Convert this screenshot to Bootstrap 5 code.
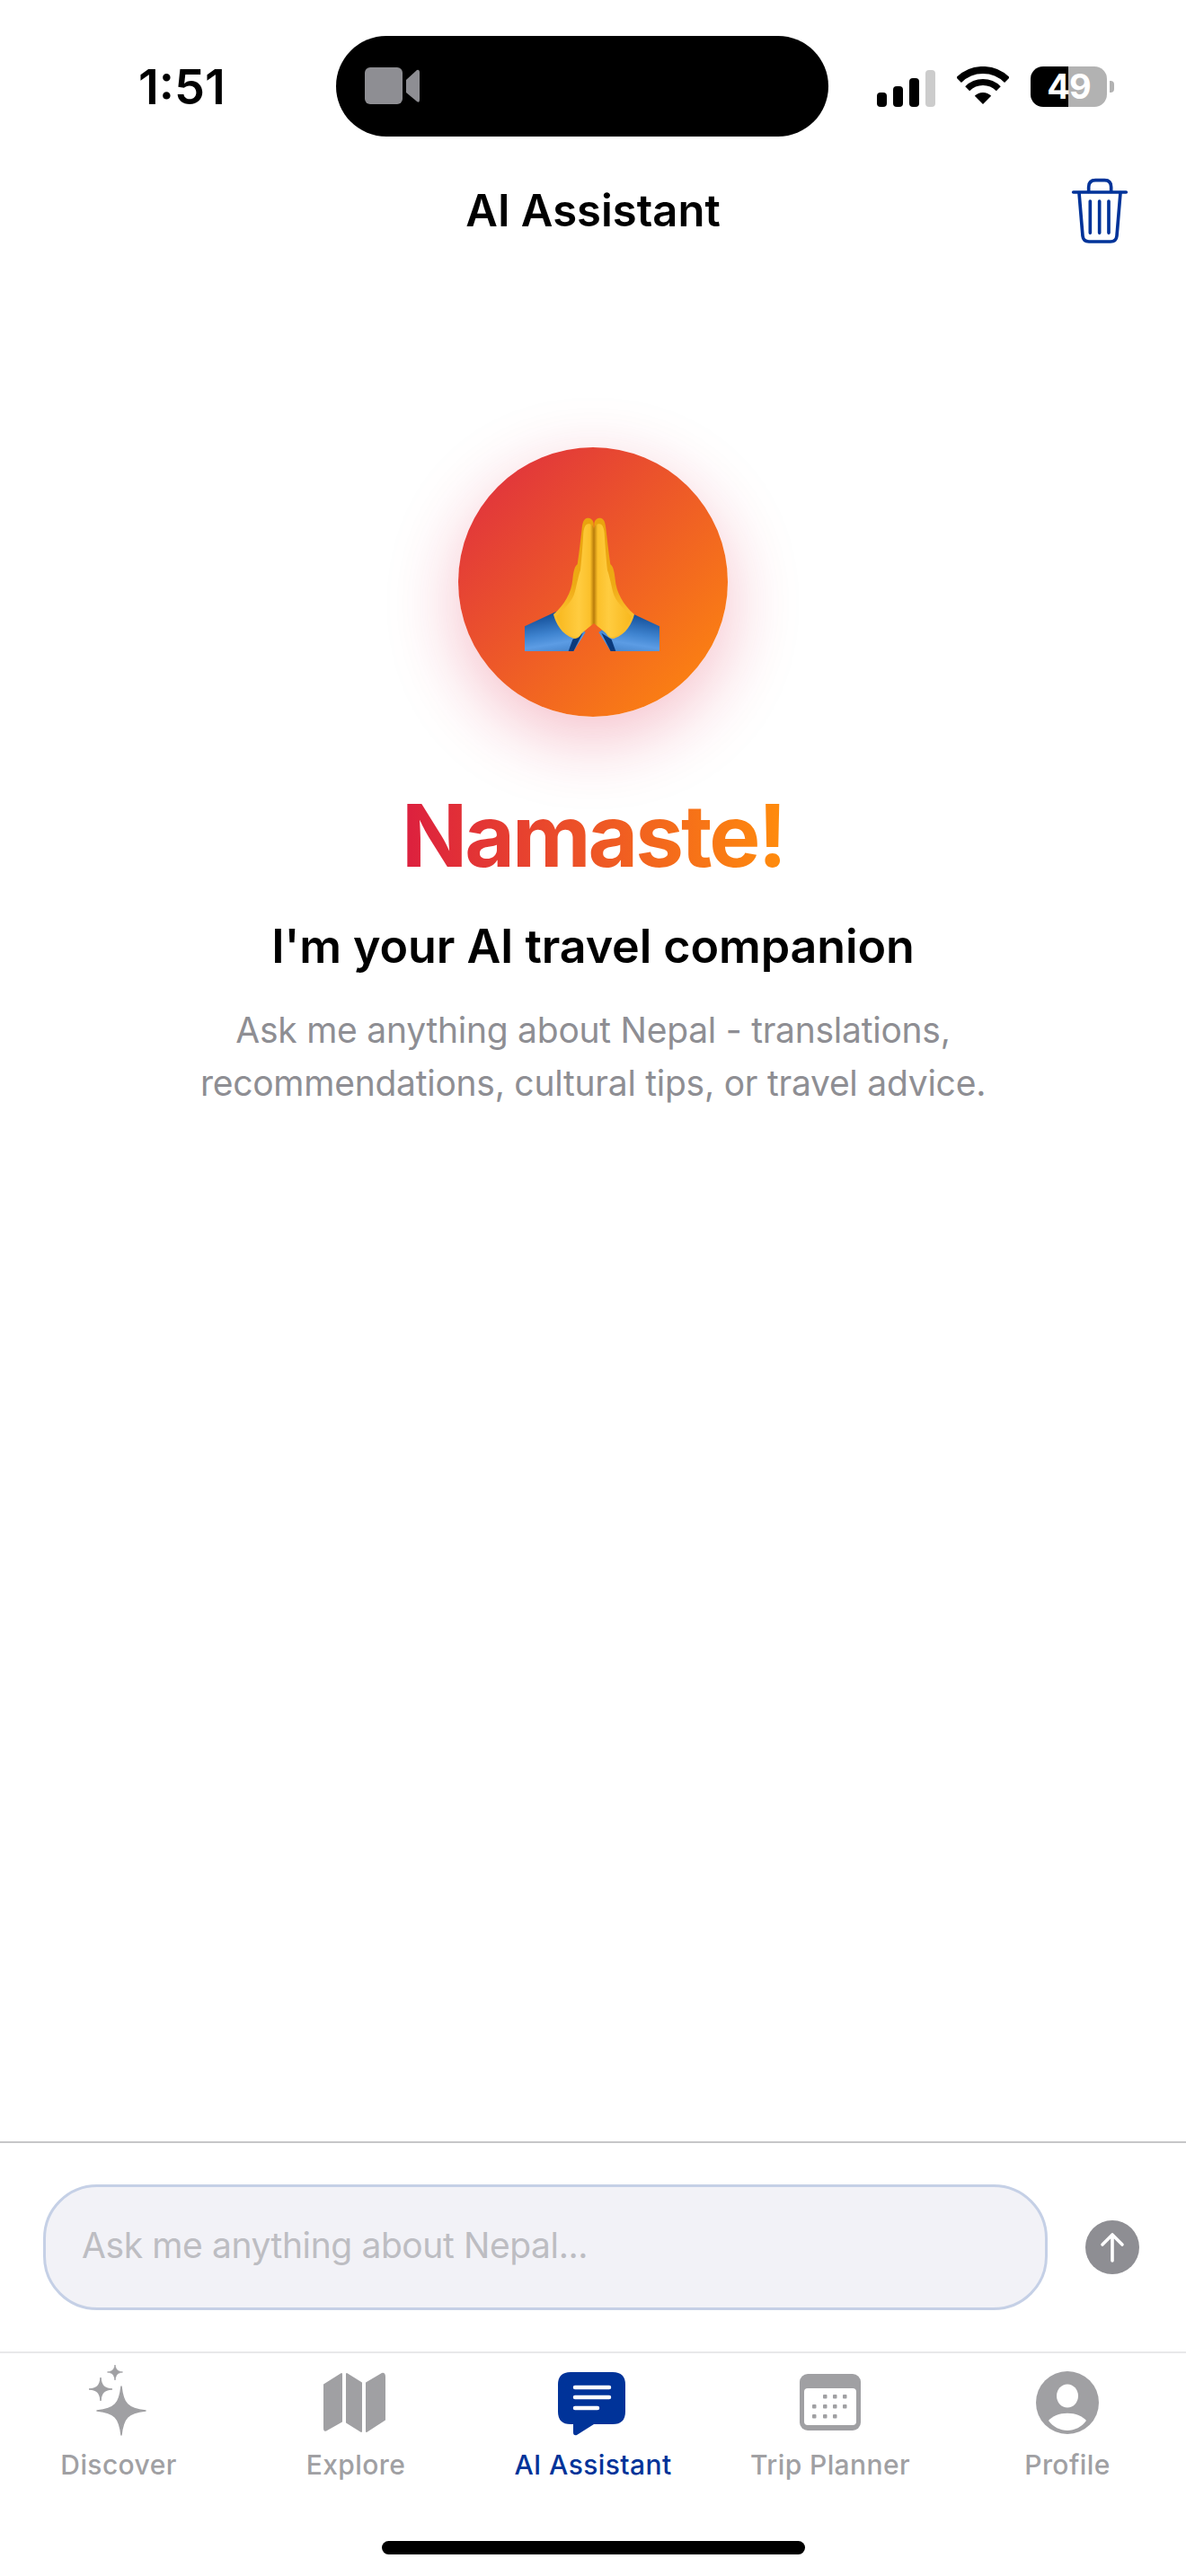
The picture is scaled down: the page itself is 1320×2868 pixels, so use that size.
<!DOCTYPE html>
<html lang="en">
  <head>
    <meta charset="UTF-8" />
    <meta name="viewport" content="width=device-width, initial-scale=1.0" />
    <title>AI Assistant</title>
    <link
      rel="stylesheet"
      href="https://cdn.jsdelivr.net/npm/bootstrap@5.3.0/dist/css/bootstrap.min.css"
    />
    <style>
      body {
        font-family: Inter, "Liberation Sans", sans-serif;
        background: #fff;
        color: #000;
      }

      .phone-page {
        width: 1320px;
        height: 2868px;
        overflow: hidden;
      }

      /* status bar */
      .status-row {
        height: 152px;
        padding-top: 40px;
      }

      .clock {
        width: 374px;
        padding-left: 154px;
        padding-top: 25px;
        font-size: 54px;
        font-weight: 600;
        line-height: 64px;
        white-space: nowrap;
      }

      .island {
        width: 548px;
        height: 112px;
        background: #000;
        border-radius: 56px;
        padding-left: 32px;
      }

      .status-icons {
        margin-left: 54px;
        padding-top: 34px;
      }

      .battery-box {
        width: 85px;
        height: 45px;
        border-radius: 14px;
        background: linear-gradient(90deg, #000 49%, #b2b2b2 49%);
        color: #fff;
        font-size: 38px;
        font-weight: 700;
        line-height: 45px;
        letter-spacing: -1px;
      }

      .battery-nub {
        width: 5px;
        height: 13px;
        margin-left: 3px;
        background: #b2b2b2;
        border-radius: 0 4px 4px 0;
      }

      /* header */
      .top-bar {
        height: 166px;
      }

      .top-side {
        flex: 1 1 0;
      }

      .top-side svg {
        margin-right: 40px;
      }

      .top-title {
        font-size: 49px;
        font-weight: 600;
        line-height: 60px;
      }

      /* welcome */
      .welcome {
        padding-top: 180px;
      }

      .namaste-disc {
        width: 300px;
        height: 300px;
        background: linear-gradient(135deg, #dd2a42, #ff8c0c);
        box-shadow: 0 24px 80px rgba(220, 20, 60, 0.28);
      }

      .namaste-word {
        margin: 74px 0 0;
        font-size: 96px;
        font-weight: 700;
        line-height: 116px;
        letter-spacing: -3px;
        background: linear-gradient(90deg, #dc1f3f, #ff8c0c);
        -webkit-background-clip: text;
        background-clip: text;
        color: transparent;
      }

      .welcome-sub {
        margin: 32px 0 0;
        font-size: 52px;
        font-weight: 600;
        line-height: 68px;
        letter-spacing: -0.1px;
      }

      .welcome-text {
        margin: 30px 0 0;
        font-size: 39px;
        line-height: 58.5px;
        letter-spacing: -0.25px;
        color: #8e8e93;
      }

      /* compose */
      .compose-bar {
        border-top: 2px solid #c6c6c8;
        padding: 46px 52px 46px 48px;
        gap: 42px;
      }

      .ask-field {
        height: 140px;
        padding: 0 40px 5px;
        font-size: 39px;
        letter-spacing: -0.4px;
        background: #f2f2f7;
        border: 3px solid #c5d0e6;
        border-radius: 60px;
      }

      .ask-field::placeholder {
        color: #bdbdc2;
      }

      .send-btn {
        width: 60px;
        height: 60px;
        background: #8e8e93;
        border: 0;
      }

      /* tabs */
      .tab-bar {
        height: 211px;
        border-top: 2px solid #e8e8ea;
        padding-top: 10px;
      }

      .tab-link {
        width: 264px;
        color: #a0a0a3;
        font-size: 30px;
        font-weight: 500;
        line-height: 36px;
        letter-spacing: 0.4px;
        text-decoration: none;
      }

      .tab-link svg {
        display: block;
        margin-bottom: 12px;
      }

      .tab-link.is-current {
        color: #003399;
      }

      .home-bar {
        width: 471px;
        height: 15px;
        margin-bottom: 24px;
        background: #000;
      }
    </style>
  </head>

  <body>
    <div class="phone-page d-flex flex-column">
      <!-- status bar -->
      <div class="status-row d-flex flex-shrink-0">
        <div class="clock">1:51</div>
        <div class="island d-flex align-items-center">
          <svg width="64" height="44" viewBox="0 0 64 44">
            <rect x="0" y="1" width="42" height="41" rx="6" fill="#8e8e93" />
            <path d="M46 15 L58 4 Q61 3 61 7 V37 Q61 41 58 39 L46 29 Z" fill="#8e8e93" />
          </svg>
        </div>
        <div class="status-icons d-flex align-items-start">
          <svg width="65" height="41" viewBox="0 0 65 41" class="mt-1">
            <rect x="0" y="25" width="11" height="16" rx="4" />
            <rect x="18" y="18" width="11" height="23" rx="4" />
            <rect x="36" y="9" width="11" height="32" rx="4" />
            <rect x="54" y="0" width="11" height="41" rx="4" fill="#cccccc" />
          </svg>
          <svg width="58" height="42" viewBox="0 0 58 42" class="ms-4 mt-0">
            <path d="M2.1 15.1 A38 38 0 0 1 55.9 15.1" fill="none" stroke="#000" stroke-width="8" />
            <path d="M11.7 24.7 A24.5 24.5 0 0 1 46.3 24.7" fill="none" stroke="#000" stroke-width="7" />
            <path d="M29 42 L19.8 32.8 A13 13 0 0 1 38.2 32.8 Z" />
          </svg>
          <div class="d-flex align-items-center ms-4">
            <div class="battery-box text-center">49</div>
            <div class="battery-nub"></div>
          </div>
        </div>
      </div>

      <!-- header -->
      <div class="top-bar d-flex align-items-center flex-shrink-0">
        <div class="top-side"></div>
        <div class="top-title">AI Assistant</div>
        <div class="top-side d-flex justify-content-end">
          <svg width="120" height="110" viewBox="0 0 360 330" fill="none" stroke="#003399" stroke-width="11" stroke-linecap="round" stroke-linejoin="round">
            <path d="M104 102 H280" />
            <path d="M155 100 V85 Q155 62 178 62 H208 Q230 62 230 85 V100" />
            <path d="M123 104 L135 248 Q137 267 156 267 H228 Q247 267 249 248 L261 104" />
            <path d="M160 132 V238 M191 132 V238 M222 132 V238" />
          </svg>
        </div>
      </div>

      <!-- welcome -->
      <main class="welcome flex-grow-1 d-flex flex-column align-items-center text-center">
        <div class="namaste-disc rounded-circle d-flex align-items-center justify-content-center">
          <svg width="200" height="176" viewBox="0 0 600 528">
            <defs>
              <linearGradient id="sleeveFill" x1="0.35" y1="0" x2="0.6" y2="1">
                <stop offset="0" stop-color="#0c4690" />
                <stop offset="0.55" stop-color="#3f84d0" />
                <stop offset="0.8" stop-color="#5c9ce4" />
                <stop offset="1" stop-color="#4a8ad2" />
              </linearGradient>
              <linearGradient id="backFill" x1="0" y1="0" x2="0" y2="1">
                <stop offset="0" stop-color="#e9a20e" />
                <stop offset="0.55" stop-color="#eeaa14" />
                <stop offset="0.8" stop-color="#fbbe2c" />
              </linearGradient>
              <linearGradient id="palmFill" x1="0" y1="0" x2="1" y2="0">
                <stop offset="0" stop-color="#f8b81e" />
                <stop offset="0.6" stop-color="#ffcc40" />
                <stop offset="0.9" stop-color="#fbc02a" />
                <stop offset="1" stop-color="#b97c0a" />
              </linearGradient>
              <g id="sleeveShape">
                <path d="M72 412 L178 362 L275 432 L235 495 H72 Z" fill="url(#sleeveFill)" />
                <path d="M232 456 L266 434 L235 495 H218 Z" fill="#0b3a7c" />
              </g>
              <g id="handShape">
                <path d="M302 400 V68 C300 55 292 50 282 50 C270 50 265 65 263 85 C258 130 253 170 248 205 C240 210 235 225 232 255 C228 300 205 340 168 372 C175 400 195 440 235 452 C245 455 255 450 262 436 Z" fill="url(#backFill)" />
                <path d="M303 402 V90 C302 76 295 70 285 70 C275 70 270 82 268 100 C265 150 262 190 258 225 C252 240 246 270 240 295 C232 330 205 350 178 378 C185 405 205 438 240 448 C250 450 258 440 265 432 Z" fill="url(#palmFill)" />
              </g>
            </defs>
            <use href="#sleeveShape" />
            <use href="#sleeveShape" transform="matrix(-1 0 0 1 594 0)" />
            <use href="#handShape" />
            <use href="#handShape" transform="matrix(-1 0 0 1 606 0)" />
          </svg>
        </div>
        <h1 class="namaste-word">Namaste!</h1>
        <h2 class="welcome-sub">I'm your AI travel companion</h2>
        <p class="welcome-text">
          Ask me anything about Nepal - translations,<br />
          recommendations, cultural tips, or travel advice.
        </p>
      </main>

      <!-- compose -->
      <div class="compose-bar d-flex align-items-center flex-shrink-0">
        <input type="text" class="ask-field form-control flex-grow-1" placeholder="Ask me anything about Nepal..." />
        <button type="button" class="send-btn btn rounded-circle p-0 d-flex align-items-center justify-content-center flex-shrink-0" aria-label="Send">
          <svg width="60" height="60" viewBox="0 0 60 60" fill="none" stroke="#fff" stroke-width="3.6" stroke-linecap="round" stroke-linejoin="round">
            <path d="M30 45 V16 M19 27 L30 16 L41 27" />
          </svg>
        </button>
      </div>

      <!-- tabs -->
      <nav class="tab-bar d-flex flex-shrink-0">
        <a href="#" class="tab-link d-flex flex-column align-items-center">
          <svg width="84" height="84" viewBox="0 0 84 84" fill="currentColor">
            <path d="M45 27 C47 46 52 52 72 54 C52 56 47 62 45 81 C43 62 38 56 18 54 C38 52 43 46 45 27 Z" stroke="currentColor" stroke-width="1.5" stroke-linejoin="round" />
            <path d="M22 17 C23 26 26 29 35 30 C26 31 23 34 22 43 C21 34 18 31 9 30 C18 29 21 26 22 17 Z" stroke="currentColor" stroke-width="1" stroke-linejoin="round" />
            <path d="M38 3 C38.7 8 41 10.3 46.5 11 C41 11.7 38.7 14 38 20 C37.3 14 35 11.7 29.5 11 C35 10.3 37.3 8 38 3 Z" stroke="currentColor" stroke-width="0.8" stroke-linejoin="round" />
          </svg>
          Discover
        </a>
        <a href="#" class="tab-link d-flex flex-column align-items-center">
          <svg width="84" height="84" viewBox="0 0 84 84" fill="currentColor" stroke="currentColor" stroke-width="2" stroke-linejoin="round">
            <path d="M26 13 L7 25 V74 Q7 77 10 75 L26 66 Z" />
            <path d="M32 13 L48 23 V77 L32 67 Z" />
            <path d="M54 23 L71 13 Q74 12 74 16 V64 L54 77 Z" />
          </svg>
          Explore
        </a>
        <a href="#" class="tab-link is-current d-flex flex-column align-items-center">
          <svg width="84" height="84" viewBox="0 0 84 84">
            <path d="M17 11 H64 Q78 11 78 25 V55 Q78 69 64 69 H43 L24 81 Q20 82 20 78 V69 H17 Q3 69 3 55 V25 Q3 11 17 11 Z" fill="currentColor" />
            <path d="M22 28 H60 M22 39 H60 M22 51 H47" fill="none" stroke="#fff" stroke-width="4.5" stroke-linecap="round" />
          </svg>
          AI Assistant
        </a>
        <a href="#" class="tab-link d-flex flex-column align-items-center">
          <svg width="84" height="84" viewBox="0 0 84 84">
            <rect x="8" y="13" width="68" height="63" rx="9" fill="currentColor" />
            <rect x="13" y="29" width="58" height="41" rx="4" fill="#fff" />
            <g fill="currentColor">
              <rect x="34" y="36" width="4.5" height="4.5" rx="1" />
              <rect x="45" y="36" width="4.5" height="4.5" rx="1" />
              <rect x="56" y="36" width="4.5" height="4.5" rx="1" />
              <rect x="22" y="47" width="4.5" height="4.5" rx="1" />
              <rect x="34" y="47" width="4.5" height="4.5" rx="1" />
              <rect x="45" y="47" width="4.5" height="4.5" rx="1" />
              <rect x="56" y="47" width="4.5" height="4.5" rx="1" />
              <rect x="22" y="58" width="4.5" height="4.5" rx="1" />
              <rect x="34" y="58" width="4.5" height="4.5" rx="1" />
              <rect x="45" y="58" width="4.5" height="4.5" rx="1" />
            </g>
          </svg>
          Trip Planner
        </a>
        <a href="#" class="tab-link d-flex flex-column align-items-center">
          <svg width="84" height="84" viewBox="0 0 84 84">
            <circle cx="42" cy="45" r="35" fill="currentColor" />
            <ellipse cx="42" cy="37.5" rx="12" ry="13" fill="#fff" />
            <path d="M21 65 C25 60 33 56.7 42 56.7 C51 56.7 59 60 63 65 C58 72 50 76 42 76 C34 76 26 72 21 65 Z" fill="#fff" />
          </svg>
          Profile
        </a>
      </nav>
      <div class="home-bar rounded-pill mx-auto"></div>
    </div>

    <script src="https://cdn.jsdelivr.net/npm/bootstrap@5.3.0/dist/js/bootstrap.bundle.min.js"></script>
  </body>
</html>
